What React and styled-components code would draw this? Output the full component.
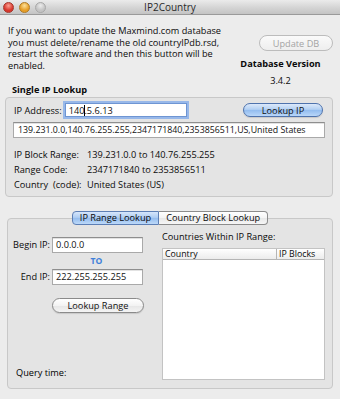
import React from 'react';
import styled, { createGlobalStyle } from 'styled-components';

const GlobalStyle = createGlobalStyle`
  html, body { margin: 0; padding: 0; background: #ececec; }
  body {
    font-family: "Open Sans", "DejaVu Sans", sans-serif;
    font-size: 9.2px;
    color: #0a0a0a;
  }
  * { box-sizing: border-box; }
`;

const Window = styled.div`
  width: 340px;
  height: 399px;
  background: #ececec;
  display: flex;
  flex-direction: column;
  overflow: hidden;
`;

const TitleBar = styled.div`
  height: 15px;
  flex: none;
  display: grid;
  grid-template-columns: 1fr auto 1fr;
  align-items: center;
  background: linear-gradient(#ebebeb, #d4d4d4 55%, #c4c4c4);
  border-bottom: 1px solid #9a9a9a;
`;

const Lights = styled.div`
  display: flex;
  gap: 5px;
  padding-left: 3px;
`;

const Light = styled.span`
  width: 11px;
  height: 11px;
  border-radius: 50%;
  border: 1px solid ${p => p.$edge};
  background: radial-gradient(circle at 50% 30%, ${p => p.$hi} 0%, ${p => p.$c} 60%, ${p => p.$c} 100%);
`;

const Title = styled.div`
  font-size: 10px;
  color: #2a2a2a;
  line-height: 14px;
`;

const TopRow = styled.div`
  display: flex;
  align-items: flex-start;
  padding-top: 10px;
`;

const LeftCol = styled.div`
  width: 228px;
  padding-left: 8px;
`;

const Paragraph = styled.p`
  margin: 0;
  line-height: 11.7px;
`;

const SectionTitle = styled.div`
  margin-top: 12px;
  padding-left: 4px;
  font-weight: bold;
  line-height: 12px;
`;

const RightCol = styled.div`
  flex: 1;
  display: flex;
  flex-direction: column;
  align-items: center;
  padding-right: 7px;
`;

const PillButton = styled.div`
  display: flex;
  align-items: center;
  justify-content: center;
  height: ${p => p.$h || 15}px;
  width: ${p => p.$w}px;
  border-radius: 8px;
  font-size: 9.2px;
  flex: none;
  border: 1px solid ${p => (p.$variant === 'blue' ? '#4f73ad' : p.$variant === 'disabled' ? '#bcbcbc' : '#8a8a8a')};
  color: ${p => (p.$variant === 'disabled' ? '#a3a3a3' : '#111')};
  background: ${p =>
    p.$variant === 'blue'
      ? 'linear-gradient(#dce9fa 0%, #b3d0f3 45%, #93bcef 52%, #b9d7f9 100%)'
      : p.$variant === 'disabled'
      ? 'linear-gradient(#fafafa, #eeeeee)'
      : 'linear-gradient(#ffffff 0%, #f3f3f3 50%, #e6e6e6 52%, #f4f4f4 100%)'};
  box-shadow: ${p => (p.$variant === 'disabled' ? 'none' : '0 1px 1px rgba(0,0,0,0.12)')};
`;

const UpdateWrap = styled.div`
  align-self: flex-end;
  margin-top: 10px;
`;

const VersionTitle = styled.div`
  margin-top: 7px;
  font-weight: bold;
  line-height: 12px;
`;

const VersionNum = styled.div`
  margin-top: 5px;
  line-height: 12px;
`;

const GroupBox = styled.div`
  margin: ${p => p.$margin};
  border: 1px solid #c8c8c8;
  border-radius: 4px;
  background: #e4e4e4;
  padding: ${p => p.$pad};
  display: flex;
  flex-direction: ${p => p.$dir || 'column'};
  flex: ${p => (p.$grow ? 1 : 'none')};
`;

const FieldRow = styled.div`
  display: flex;
  align-items: center;
  height: ${p => p.$h || 17}px;
  margin-top: ${p => p.$mt || 0}px;
`;

const Label = styled.span`
  width: ${p => (p.$w ? `${p.$w}px` : 'auto')};
  text-align: ${p => p.$align || 'left'};
  margin-left: ${p => p.$ml || 0}px;
  flex: none;
  white-space: nowrap;
`;

const TextField = styled.div`
  width: ${p => p.$w}px;
  height: ${p => p.$h}px;
  margin-left: ${p => p.$ml || 0}px;
  margin-top: ${p => p.$mt || 0}px;
  font-size: ${p => p.$fs || 9.2}px;
  background: #fff;
  border: 1px solid ${p => (p.$focus ? '#6e95d3' : '#a9a9a9')};
  border-top-color: ${p => (p.$focus ? '#6e95d3' : '#8e8e8e')};
  box-shadow: ${p => (p.$focus ? '0 0 0 2px rgba(110,160,235,0.65)' : 'inset 0 1px 0 #e2e2e2')};
  display: flex;
  align-items: center;
  padding-left: ${p => p.$pl || 3}px;
  white-space: nowrap;
  overflow: hidden;
  color: #111;
  flex: none;
`;

const Caret = styled.span`
  display: inline-block;
  width: 1px;
  height: 11px;
  background: #000;
  margin-right: -1px;
  vertical-align: middle;
`;

const Spacer = styled.div`
  flex: 1;
`;

const InfoGrid = styled.div`
  margin-top: 9px;
  display: grid;
  grid-template-columns: 73px 1fr;
  grid-auto-rows: 15px;
  align-items: center;
  padding-left: 1px;
`;

const TabArea = styled.div`
  margin-top: 14px;
  display: flex;
  flex-direction: column;
  flex: 1;
`;

const TabBar = styled.div`
  display: flex;
  justify-content: center;
  position: relative;
  z-index: 1;
`;

const Tab = styled.div`
  height: 14px;
  padding: 0 ${p => p.$px}px;
  display: flex;
  align-items: center;
  font-size: 9.2px;
  border: 1px solid #8c8c8c;
  border-left-width: ${p => (p.$first ? 1 : 0)}px;
  border-radius: ${p => (p.$first ? '4px 0 0 4px' : '0 4px 4px 0')};
  background: ${p =>
    p.$active
      ? 'linear-gradient(#d6e6fb 0%, #b0cef3 45%, #96bdee 52%, #bcd9f9 100%)'
      : 'linear-gradient(#ffffff 0%, #f4f4f4 50%, #e8e8e8 52%, #f6f6f6 100%)'};
  border-color: ${p => (p.$active ? '#5d7fb5' : '#8c8c8c')};
`;

const Pane = styled.div`
  display: flex;
  flex-direction: column;
  width: ${p => (p.$w ? `${p.$w}px` : 'auto')};
  flex: ${p => (p.$w ? 'none' : 1)};
`;

const ToLabel = styled.div`
  margin: 3px 0 0 43px;
  width: 91px;
  text-align: center;
  color: #3f7fd9;
  font-weight: bold;
  line-height: 10px;
  font-size: 8.6px;
`;

const QueryTime = styled.div`
  margin-top: auto;
  margin-left: 8px;
  margin-bottom: 1px;
  line-height: 12px;
  color: #000;
`;

const ListLabel = styled.div`
  line-height: 12px;
`;

const Table = styled.div`
  margin-top: 5px;
  flex: 1;
  background: #fff;
  border: 1px solid #c3c3c3;
  display: flex;
  flex-direction: column;
`;

const TableHeader = styled.div`
  display: grid;
  grid-template-columns: 1fr 48px;
  height: 11px;
  background: linear-gradient(#ffffff, #ececec);
  border-bottom: 1px solid #b5b5b5;
`;

const HeaderCell = styled.div`
  padding-left: 2px;
  line-height: 10px;
  font-size: 8.8px;
  border-left: ${p => (p.$divider ? '1px solid #b5b5b5' : 'none')};
  white-space: nowrap;
  overflow: hidden;
`;

export default function App() {
  return (
    <>
      <GlobalStyle />
      <Window>
        <TitleBar>
          <Lights>
            <Light $c="#d8372c" $hi="#fba092" $edge="#a3362c" />
            <Light $c="#e79e27" $hi="#fbe09a" $edge="#b07a23" />
            <Light $c="#c4c4c4" $hi="#ececec" $edge="#a8a8a8" />
          </Lights>
          <Title>IP2Country</Title>
          <div />
        </TitleBar>

        <TopRow>
          <LeftCol>
            <Paragraph>
              If you want to update the Maxmind.com database
              <br />
              you must delete/rename the old countryIPdb.rsd,
              <br />
              restart the software and then this button will be
              <br />
              enabled.
            </Paragraph>
            <SectionTitle>Single IP Lookup</SectionTitle>
          </LeftCol>
          <RightCol>
            <UpdateWrap>
              <PillButton $variant="disabled" $w={74} $h={16}>
                Update DB
              </PillButton>
            </UpdateWrap>
            <VersionTitle>Database Version</VersionTitle>
            <VersionNum>3.4.2</VersionNum>
          </RightCol>
        </TopRow>

        <GroupBox $margin="1px 7px 0 5px" $pad="4px 7px 4px 7px">
          <FieldRow>
            <Label $ml={1}>IP Address:</Label>
            <TextField $w={122} $h={14} $ml={3} $focus>
              140<Caret />.5.6.13
            </TextField>
            <Spacer />
            <PillButton $variant="blue" $w={80} $h={14}>
              Lookup IP
            </PillButton>
            <Label $w={2} />
          </FieldRow>
          <TextField $w={312} $h={16} $pl={4} $mt={3} $fs={8.8}>
            139.231.0.0,140.76.255.255,2347171840,2353856511,US,United States
          </TextField>
          <InfoGrid>
            <span>IP Block Range:</span>
            <span>139.231.0.0 to 140.76.255.255</span>
            <span>Range Code:</span>
            <span>2347171840 to 2353856511</span>
            <span>Country&nbsp; (code):</span>
            <span>United States (US)</span>
          </InfoGrid>
        </GroupBox>

        <TabArea>
          <TabBar>
            <Tab $first $active $px={7}>
              IP Range Lookup
            </Tab>
            <Tab $px={7}>Country Block Lookup</Tab>
          </TabBar>
          <GroupBox $margin="-7px 7px 10px 7px" $pad="12px 7px 8px 0" $dir="row" $grow>
            <Pane>
              <FieldRow $mt={6} $h={16}>
                <Label $w={42} $align="right">Begin IP:</Label>
                <TextField $w={91} $h={16} $ml={2}>0.0.0.0</TextField>
              </FieldRow>
              <ToLabel>TO</ToLabel>
              <FieldRow $mt={3} $h={16}>
                <Label $w={42} $align="right">End IP:</Label>
                <TextField $w={91} $h={16} $ml={2}>222.255.255.255</TextField>
              </FieldRow>
              <FieldRow $mt={13} $h={15}>
                <Label $w={44} />
                <PillButton $w={92} $h={15}>Lookup Range</PillButton>
              </FieldRow>
              <QueryTime>Query time:</QueryTime>
            </Pane>
            <Pane $w={163}>
              <ListLabel>Countries Within IP Range:</ListLabel>
              <Table>
                <TableHeader>
                  <HeaderCell>Country</HeaderCell>
                  <HeaderCell $divider>IP Blocks</HeaderCell>
                </TableHeader>
              </Table>
            </Pane>
          </GroupBox>
        </TabArea>
      </Window>
    </>
  );
}
